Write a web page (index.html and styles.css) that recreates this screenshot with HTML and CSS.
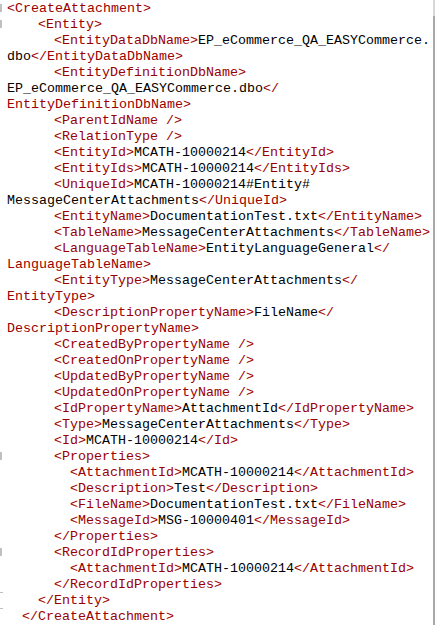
FILE: index.html
```html
<!DOCTYPE html>
<html>
<head>
<meta charset="utf-8">
<link rel="stylesheet" href="styles.css">
</head>
<body>
<div class="view">
<div class="ln i0 m"><span class="t">&lt;CreateAttachment&gt;</span></div>
<div class="ln i1 m"><span class="t">&lt;Entity&gt;</span></div>
<div class="ln i2"><span class="t">&lt;EntityDataDbName&gt;</span>EP_eCommerce_QA_EASYCommerce.</div>
<div class="ln i0">dbo<span class="t">&lt;/EntityDataDbName&gt;</span></div>
<div class="ln i2"><span class="t">&lt;EntityDefinitionDbName&gt;</span></div>
<div class="ln i0">EP_eCommerce_QA_EASYCommerce.dbo<span class="t">&lt;/</span></div>
<div class="ln i0"><span class="t">EntityDefinitionDbName&gt;</span></div>
<div class="ln i2"><span class="t">&lt;ParentIdName /&gt;</span></div>
<div class="ln i2"><span class="t">&lt;RelationType /&gt;</span></div>
<div class="ln i2"><span class="t">&lt;EntityId&gt;</span>MCATH-10000214<span class="t">&lt;/EntityId&gt;</span></div>
<div class="ln i2"><span class="t">&lt;EntityIds&gt;</span>MCATH-10000214<span class="t">&lt;/EntityIds&gt;</span></div>
<div class="ln i2"><span class="t">&lt;UniqueId&gt;</span>MCATH-10000214#Entity#</div>
<div class="ln i0">MessageCenterAttachments<span class="t">&lt;/UniqueId&gt;</span></div>
<div class="ln i2"><span class="t">&lt;EntityName&gt;</span>DocumentationTest.txt<span class="t">&lt;/EntityName&gt;</span></div>
<div class="ln i2"><span class="t">&lt;TableName&gt;</span>MessageCenterAttachments<span class="t">&lt;/TableName&gt;</span></div>
<div class="ln i2"><span class="t">&lt;LanguageTableName&gt;</span>EntityLanguageGeneral<span class="t">&lt;/</span></div>
<div class="ln i0"><span class="t">LanguageTableName&gt;</span></div>
<div class="ln i2"><span class="t">&lt;EntityType&gt;</span>MessageCenterAttachments<span class="t">&lt;/</span></div>
<div class="ln i0"><span class="t">EntityType&gt;</span></div>
<div class="ln i2"><span class="t">&lt;DescriptionPropertyName&gt;</span>FileName<span class="t">&lt;/</span></div>
<div class="ln i0"><span class="t">DescriptionPropertyName&gt;</span></div>
<div class="ln i2"><span class="t">&lt;CreatedByPropertyName /&gt;</span></div>
<div class="ln i2"><span class="t">&lt;CreatedOnPropertyName /&gt;</span></div>
<div class="ln i2"><span class="t">&lt;UpdatedByPropertyName /&gt;</span></div>
<div class="ln i2"><span class="t">&lt;UpdatedOnPropertyName /&gt;</span></div>
<div class="ln i2"><span class="t">&lt;IdPropertyName&gt;</span>AttachmentId<span class="t">&lt;/IdPropertyName&gt;</span></div>
<div class="ln i2"><span class="t">&lt;Type&gt;</span>MessageCenterAttachments<span class="t">&lt;/Type&gt;</span></div>
<div class="ln i2"><span class="t">&lt;Id&gt;</span>MCATH-10000214<span class="t">&lt;/Id&gt;</span></div>
<div class="ln i2 m"><span class="t">&lt;Properties&gt;</span></div>
<div class="ln i3"><span class="t">&lt;AttachmentId&gt;</span>MCATH-10000214<span class="t">&lt;/AttachmentId&gt;</span></div>
<div class="ln i3"><span class="t">&lt;Description&gt;</span>Test<span class="t">&lt;/Description&gt;</span></div>
<div class="ln i3"><span class="t">&lt;FileName&gt;</span>DocumentationTest.txt<span class="t">&lt;/FileName&gt;</span></div>
<div class="ln i3"><span class="t">&lt;MessageId&gt;</span>MSG-10000401<span class="t">&lt;/MessageId&gt;</span></div>
<div class="ln i2"><span class="t">&lt;/Properties&gt;</span></div>
<div class="ln i2 m"><span class="t">&lt;RecordIdProperties&gt;</span></div>
<div class="ln i3"><span class="t">&lt;AttachmentId&gt;</span>MCATH-10000214<span class="t">&lt;/AttachmentId&gt;</span></div>
<div class="ln i2"><span class="t">&lt;/RecordIdProperties&gt;</span></div>
<div class="ln i1 tick"><span class="t">&lt;/Entity&gt;</span></div>
<div class="ln ic tick"><span class="t">&lt;/CreateAttachment&gt;</span></div>
</div>
</body>
</html>
```

FILE: styles.css
```css
html, body {
  margin: 0;
  padding: 0;
  background: #ffffff;
}

.view {
  width: 435px;
  height: 625px;
  box-sizing: border-box;
  font-family: "Liberation Mono", "Courier New", monospace;
  font-size: 13.33px;
  line-height: 16px;
  color: #000000;
  background:
    linear-gradient(#d8d8d8, #d8d8d8) right top / 2px 16px no-repeat,
    linear-gradient(#a8a8a8, #a8a8a8) right 16px / 2px 100% no-repeat,
    #ffffff;
  padding-top: 1px;
}

.ln {
  position: relative;
  height: 16px;
  white-space: pre;
}

.t {
  color: #990000;
}

.i0 { padding-left: 7px; }
.ic { padding-left: 22px; }
.i1 { padding-left: 38px; }
.i2 { padding-left: 54px; }
.i3 { padding-left: 70px; }

.m::before {
  content: "";
  position: absolute;
  left: 0;
  top: 3px;
  width: 2px;
  height: 8px;
  background: #c0c0c0;
}

.tick::before {
  content: "";
  position: absolute;
  left: 0;
  top: -1px;
  width: 3px;
  height: 1px;
  background: #c0c0c0;
}
```
